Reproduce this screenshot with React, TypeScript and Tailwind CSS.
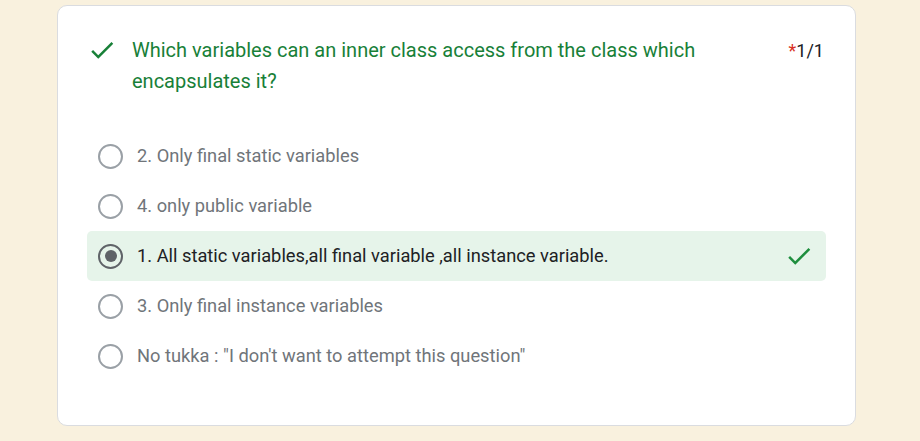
import React from 'react'

type Option = { label: string; selected?: boolean }

const options: Option[] = [
  { label: '2. Only final static variables' },
  { label: '4. only public variable' },
  { label: '1. All static variables,all final variable ,all instance variable.', selected: true },
  { label: '3. Only final instance variables' },
  { label: 'No tukka : "I don\'t want to attempt this question"' },
]

function Check({ className }: { className?: string }) {
  return (
    <svg viewBox="0 0 24 24" className={className} fill="currentColor">
      <path d="M9 16.17L4.83 12l-1.42 1.41L9 19 21 7l-1.41-1.41z" />
    </svg>
  )
}

function Radio({ selected }: { selected?: boolean }) {
  return (
    <div
      className={`w-[25px] h-[25px] rounded-full border-[2.5px] flex items-center justify-center shrink-0 ${
        selected ? 'border-[#5f6368]' : 'border-[#9aa0a6]'
      }`}
    >
      {selected && <div className="w-[12px] h-[12px] rounded-full bg-[#5f6368]" />}
    </div>
  )
}

export default function App() {
  return (
    <div
      className="w-[920px] h-[441px] bg-[#f9f1de] pt-[5px] pl-[57px]"
      style={{ fontFamily: 'Roboto, "Liberation Sans", sans-serif' }}
    >
      <div className="w-[799px] h-[421px] bg-white rounded-[10px] border border-[#dadce0] px-[29px] pt-[29px]">
        {/* Title */}
        <div className="flex items-start">
          <Check className="w-[30px] h-[30px] text-[#188038] shrink-0" />
          <div className="ml-[15px] flex-1 text-[20px] leading-[31px] text-[#188038] pr-6">
            Which variables can an inner class access from the class which encapsulates it?
          </div>
          <div className="mr-[2px] text-[18px] leading-[31px] text-[#202124] whitespace-nowrap">
            <span className="text-[#d93025]">*</span>1/1
          </div>
        </div>

        {/* Options */}
        <div className="mt-[34px] flex flex-col">
          {options.map((o) => (
            <div
              key={o.label}
              className={`h-[50px] flex items-center pl-[11px] pr-[12px] rounded-[5px] ${
                o.selected ? 'bg-[#e6f4ea]' : ''
              }`}
            >
              <Radio selected={o.selected} />
              <span
                className={`ml-[14px] flex-1 text-[18.3px] ${
                  o.selected ? 'text-[#202124]' : 'text-[#70757a]'
                }`}
              >
                {o.label}
              </span>
              {o.selected && <Check className="w-[30px] h-[30px] text-[#1e8e3e]" />}
            </div>
          ))}
        </div>
      </div>
    </div>
  )
}
